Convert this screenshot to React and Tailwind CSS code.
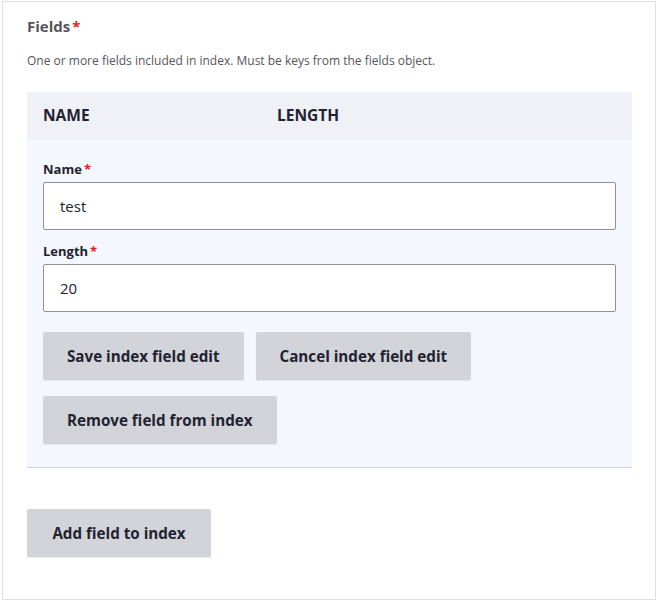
export default function App() {
  const font = { fontFamily: '"Open Sans", "Noto Sans", Arial, sans-serif' };
  const btn =
    "h-[48px] px-6 rounded-[2px] bg-[#d3d4d9] text-[15.2px] font-bold text-[#222330] shadow-[0_1px_1px_rgba(0,0,0,0.08)]";
  return (
    <div className="w-[658px] h-[601px] bg-white p-[1px] pl-[2px] pr-[2px]" style={font}>
      <div className="h-full border border-[#dedfe4] px-6 pt-[14px]">
        <div className="text-[15px] font-bold text-[#55565b] leading-[20px]">
          Fields<span className="text-[#dc2323] ml-[2px]">*</span>
        </div>
        <div className="mt-[17px] text-[12px] text-[#55565b] leading-[16px]">
          One or more fields included in index. Must be keys from the fields object.
        </div>
        <div className="mt-[23px] w-[605px]">
          <div className="h-[48px] bg-[#f0f1f6] flex items-center px-4 text-[15.5px] font-bold text-[#222330]">
            <div className="w-[234px]">NAME</div>
            <div>LENGTH</div>
          </div>
          <div className="bg-[#f4f7fd] border-b border-[#d3d4d9] px-4 pt-[20px] pb-[23px]">
            <div className="text-[13px] font-bold text-[#222330] leading-[18px]">
              Name<span className="text-[#dc2323] ml-[2px]">*</span>
            </div>
            <div className="mt-[4px] h-[48px] w-[573px] bg-white border border-[#8e929c] rounded-[2px] flex items-center px-4 text-[15px] text-[#222330]">
              test
            </div>
            <div className="mt-[12px] text-[13px] font-bold text-[#222330] leading-[18px]">
              Length<span className="text-[#dc2323] ml-[2px]">*</span>
            </div>
            <div className="mt-[4px] h-[48px] w-[573px] bg-white border border-[#8e929c] rounded-[2px] flex items-center px-4 text-[15px] text-[#222330]">
              20
            </div>
            <div className="mt-[20px] flex flex-wrap gap-x-3 gap-y-4 w-[450px]">
              <button className={btn}>Save index field edit</button>
              <button className={btn}>Cancel index field edit</button>
              <button className={btn}>Remove field from index</button>
            </div>
          </div>
        </div>
        <div className="mt-[41px]">
          <button className={btn + " w-[184px]"}>Add field to index</button>
        </div>
      </div>
    </div>
  );
}
